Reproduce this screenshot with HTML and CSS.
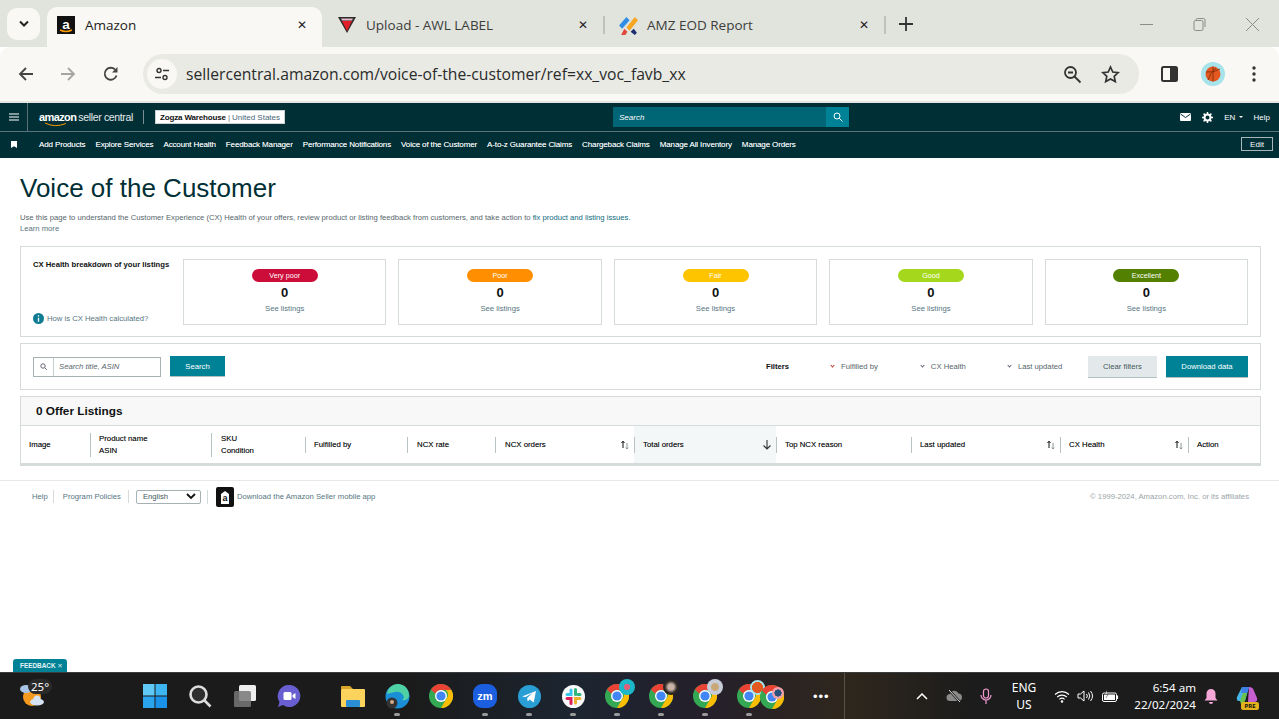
FILE: index.html
```html
<!DOCTYPE html>
<html lang="en">

<head>
    <meta charset="UTF-8">
    <meta name="viewport" content="width=device-width, initial-scale=1.0">
    <title>Voice of the Customer</title>
    <link rel="stylesheet" href="styles.css">
</head>

<body>

    <!-- Shared icons -->
    <svg class="defs" width="0" height="0">
        <symbol id="chrome" viewBox="0 0 24 24">
            <circle cx="12" cy="12" r="12" fill="#34a853"/>
            <path d="M12 0a12 12 0 0 1 10.4 6H12a6 6 0 0 0-5.6 3.8L1.9 5.6A12 12 0 0 1 12 0z" fill="#ea4335"/>
            <path d="M22.4 6A12 12 0 0 1 12 24l5.2-9a6 6 0 0 0-.4-9z" fill="#fbbc04"/>
            <circle cx="12" cy="12" r="6" fill="#fff"/>
            <circle cx="12" cy="12" r="4.6" fill="#4285f4"/>
        </symbol>
        <symbol id="sort" viewBox="0 0 10 10">
            <path d="M3 8V1.5M1.5 3L3 1.2 4.5 3" fill="none" stroke="#111" stroke-width="1"/>
            <path d="M7 3v6M5.8 7.6L7 9l1.2-1.4" fill="none" stroke="#8a9699" stroke-width="1"/>
        </symbol>
    </svg>

    <!-- Browser tabs -->
    <header class="tabstrip">
        <div class="tab-menu">
            <svg width="12" height="8" viewBox="0 0 12 8"><path d="M2 1.5l4 4 4-4" fill="none" stroke="#222" stroke-width="2"/></svg>
        </div>
        <div class="tab tab-active">
            <svg class="favicon" viewBox="0 0 18 18">
                <rect width="18" height="18" fill="#111"/>
                <text x="9" y="12.500" text-anchor="middle" class="favicon-a">a</text>
                <path d="M3 14q6 3 12 0" fill="none" stroke="#f90" stroke-width="1.400"/>
            </svg>
            <span class="tab-title">Amazon</span>
            <span class="tab-close">&#10005;</span>
        </div>
        <div class="tab tab-second">
            <svg class="favicon" viewBox="0 0 18 18">
                <path d="M0 1h18l-9 16z" fill="#2b2b2b"/>
                <path d="M4 5h10l-5 10z" fill="#e11d2a"/>
                <path d="M3 2.500h12l-1 2H4z" fill="#e8b9c9"/>
            </svg>
            <span class="tab-title">Upload - AWL LABEL</span>
            <span class="tab-close">&#10005;</span>
        </div>
        <div class="tab-sep"></div>
        <div class="tab">
            <svg class="favicon favicon-wide" viewBox="0 0 20 20">
                <path d="M1 10L8 2l3 3-7 8z" fill="#2f8de4"/>
                <path d="M8 12l8-10 3 3-8 10z" fill="#f5a623"/>
                <path d="M6 13l3 3-2 3H3z" fill="#e0483e"/>
                <path d="M12 16l3-3 3 4-2 2z" fill="#1d2f6f"/>
            </svg>
            <span class="tab-title">AMZ EOD Report</span>
            <span class="tab-close">&#10005;</span>
        </div>
        <div class="tab-sep"></div>
        <svg class="tab-new" width="14" height="14" viewBox="0 0 14 14"><path d="M7 0v14M0 7h14" stroke="#333" stroke-width="1.800"/></svg>
        <div class="window-controls">
            <svg width="13" height="13" viewBox="0 0 13 13"><path d="M0 6.500h13" stroke="#8b8b88"/></svg>
            <svg width="13" height="13" viewBox="0 0 13 13"><path d="M3 2.500V2a1.500 1.500 0 0 1 1.500-1.500h6A1.500 1.500 0 0 1 12 2v7" fill="none" stroke="#8b8b88"/><rect x="1" y="2.500" width="9" height="10" rx="1.500" fill="none" stroke="#8b8b88"/></svg>
            <svg width="13" height="13" viewBox="0 0 13 13"><path d="M0 0l13 13M13 0L0 13" stroke="#8b8b88"/></svg>
        </div>
    </header>

    <!-- Browser toolbar -->
    <div class="toolbar">
        <svg class="tool" width="16" height="16" viewBox="0 0 16 16"><path d="M15 8H2M8 2L2 8l6 6" fill="none" stroke="#444" stroke-width="1.800"/></svg>
        <svg class="tool" width="16" height="16" viewBox="0 0 16 16"><path d="M1 8h13M8 2l6 6-6 6" fill="none" stroke="#a5a5a2" stroke-width="1.800"/></svg>
        <svg class="tool" width="16" height="16" viewBox="0 0 16 16"><path d="M13.500 9.500A6 6 0 1 1 12 3.500" fill="none" stroke="#444" stroke-width="1.800"/><path d="M14.500 1v5.500H9z" fill="#444"/></svg>
        <div class="omnibox">
            <span class="site-info">
                <svg width="14" height="14" viewBox="0 0 14 14"><circle cx="4" cy="3.500" r="2" fill="none" stroke="#333" stroke-width="1.400"/><path d="M8 3.500h6M0 10.500h6" stroke="#333" stroke-width="1.400"/><circle cx="10" cy="10.500" r="2" fill="none" stroke="#333" stroke-width="1.400"/></svg>
            </span>
            <span class="url">sellercentral.amazon.com/voice-of-the-customer/ref=xx_voc_favb_xx</span>
            <svg width="19" height="19" viewBox="0 0 19 19"><circle cx="7.500" cy="7.500" r="5.500" fill="none" stroke="#333" stroke-width="1.800"/><path d="M5 7.500h5M11.500 11.500l6 6" stroke="#333" stroke-width="1.800"/></svg>
            <svg width="19" height="19" viewBox="0 0 19 19"><path d="M9.500 2l2.300 5 5.400.6-4 3.700 1.100 5.300-4.800-2.700-4.800 2.700 1.100-5.300-4-3.700 5.400-.6z" fill="none" stroke="#333" stroke-width="1.700"/></svg>
        </div>
        <svg class="side-panel" width="17" height="16" viewBox="0 0 17 16"><rect x="1" y="1" width="15" height="14" rx="1.500" fill="#f9f8f4" stroke="#333" stroke-width="2"/><rect x="9" y="1" width="7" height="14" fill="#333"/></svg>
        <svg class="avatar" width="24" height="24" viewBox="0 0 24 24">
            <circle cx="12" cy="12" r="12" fill="#a6e3ea"/>
            <circle cx="12" cy="12" r="7.500" fill="#e2581f"/>
            <path d="M12 4.500v15M5 10q7 1 14-3M7 18q2-7 8-12" fill="none" stroke="#7c2b0c" stroke-width=".8"/>
        </svg>
        <svg class="kebab" width="4" height="16" viewBox="0 0 4 16"><circle cx="2" cy="2" r="1.700" fill="#333"/><circle cx="2" cy="8" r="1.700" fill="#333"/><circle cx="2" cy="14" r="1.700" fill="#333"/></svg>
    </div>

    <!-- Seller Central header -->
    <div class="topbar">
        <div class="burger">
            <svg width="10" height="8" viewBox="0 0 10 8"><path d="M0 1h10M0 4h10M0 7h10" stroke="#fff" stroke-width="1.100"/></svg>
        </div>
        <div class="brand">
            <span class="brand-amazon">amazon</span>
            <span class="brand-seller">seller central</span>
            <svg class="brand-smile" width="24" height="5" viewBox="0 0 24 5"><path d="M1 1q10 5 21 .5" fill="none" stroke="#f90" stroke-width="1"/></svg>
        </div>
        <div class="store">
            <b>Zogza Warehouse</b><span class="store-sep">|</span><span class="store-region">United States</span>
        </div>
        <div class="site-search">
            <span class="site-search-text">Search</span>
            <span class="site-search-btn">
                <svg width="10" height="10" viewBox="0 0 10 10"><circle cx="4" cy="4" r="3" fill="none" stroke="#fff"/><path d="M6.200 6.200L9.500 9.500" stroke="#fff"/></svg>
            </span>
        </div>
        <div class="top-actions">
            <svg width="11" height="8" viewBox="0 0 11 8"><rect width="11" height="8" rx="1" fill="#fff"/><path d="M.5 1l5 3.500 5-3.500" fill="none" stroke="#002f36"/></svg>
            <svg width="11" height="11" viewBox="0 0 11 11"><circle cx="5.500" cy="5.500" r="3" fill="none" stroke="#fff" stroke-width="2"/><path d="M5.500 0v2M5.500 9v2M0 5.500h2M9 5.500h2M1.600 1.600L3 3M8 8l1.400 1.400M1.600 9.400L3 8M8 3l1.400-1.400" stroke="#fff" stroke-width="1.500"/></svg>
            <span class="lang">EN <i class="caret"></i></span>
            <span>Help</span>
        </div>
    </div>

    <!-- Bookmarks row -->
    <nav class="navrow">
        <svg class="bookmark" width="6" height="7" viewBox="0 0 6 7"><path d="M0 0h6v7L3 5.300 0 7z" fill="#fff"/></svg>
        <a href="#">Add Products</a>
        <a href="#">Explore Services</a>
        <a href="#">Account Health</a>
        <a href="#">Feedback Manager</a>
        <a href="#">Performance Notifications</a>
        <a href="#">Voice of the Customer</a>
        <a href="#">A-to-z Guarantee Claims</a>
        <a href="#">Chargeback Claims</a>
        <a href="#">Manage All Inventory</a>
        <a href="#">Manage Orders</a>
        <button class="edit-btn">Edit</button>
    </nav>

    <!-- Page -->
    <main class="page">
        <div class="content">
            <h1>Voice of the Customer</h1>
            <p class="intro">Use this page to understand the Customer Experience (CX) Health of your offers, review product or listing feedback from customers, and take action to <a href="#">fix product and listing issues.</a><br><a href="#" class="learn">Learn more</a></p>

            <section class="panel health">
                <div class="health-side">
                    <b>CX Health breakdown of your listings</b>
                    <a href="#" class="health-how">
                        <svg width="11" height="11" viewBox="0 0 11 11"><circle cx="5.500" cy="5.500" r="5.500" fill="#0f7c94"/><path d="M5.500 2.300v1.200M5.500 4.700v4" stroke="#fff" stroke-width="1.300"/></svg>
                        How is CX Health calculated?
                    </a>
                </div>
                <div class="health-card"><span class="pill pill-verypoor">Very poor</span><strong>0</strong><a href="#">See listings</a></div>
                <div class="health-card"><span class="pill pill-poor">Poor</span><strong>0</strong><a href="#">See listings</a></div>
                <div class="health-card"><span class="pill pill-fair">Fair</span><strong>0</strong><a href="#">See listings</a></div>
                <div class="health-card"><span class="pill pill-good">Good</span><strong>0</strong><a href="#">See listings</a></div>
                <div class="health-card"><span class="pill pill-excellent">Excellent</span><strong>0</strong><a href="#">See listings</a></div>
            </section>

            <section class="panel filters">
                <div class="search-box">
                    <span class="search-icon">
                        <svg width="7" height="7" viewBox="0 0 7 7"><circle cx="3" cy="3" r="2.200" fill="none" stroke="#667"/><path d="M4.600 4.600L6.800 6.800" stroke="#667"/></svg>
                    </span>
                    <span class="search-hint">Search title, ASIN</span>
                </div>
                <button class="btn btn-teal btn-search">Search</button>
                <b class="filters-label">Filters</b>
                <span class="filter filter-fulfilled"><i class="chev chev-red"></i>Fulfilled by</span>
                <span class="filter filter-health"><i class="chev"></i>CX Health</span>
                <span class="filter filter-updated"><i class="chev"></i>Last updated</span>
                <button class="btn btn-grey">Clear filters</button>
                <button class="btn btn-teal btn-download">Download data</button>
            </section>

            <section class="panel listings">
                <h2>0 Offer Listings</h2>
                <div class="table-head">
                    <div class="col col-image"><span class="cell">Image</span></div>
                    <div class="col col-name"><span class="cell cell-tall">Product name<br>ASIN</span></div>
                    <div class="col col-sku"><span class="cell cell-tall">SKU<br>Condition</span></div>
                    <div class="col col-fulfilled"><span class="cell">Fulfilled by</span></div>
                    <div class="col col-rate"><span class="cell">NCX rate</span></div>
                    <div class="col col-orders"><span class="cell cell-sort">NCX orders<svg width="10" height="10"><use href="#sort"/></svg></span></div>
                    <div class="col col-total"><span class="cell cell-sort">Total orders<svg width="10" height="10" viewBox="0 0 10 10"><path d="M5 0v9M1.500 5.500L5 9l3.500-3.500" fill="none" stroke="#333" stroke-width="1.100"/></svg></span></div>
                    <div class="col col-reason"><span class="cell">Top NCX reason</span></div>
                    <div class="col col-updated"><span class="cell cell-sort">Last updated<svg width="10" height="10"><use href="#sort"/></svg></span></div>
                    <div class="col col-health"><span class="cell cell-sort">CX Health<svg width="10" height="10"><use href="#sort"/></svg></span></div>
                    <div class="col col-action"><span class="cell">Action</span></div>
                </div>
            </section>
        </div>

        <footer class="page-footer">
            <a href="#">Help</a>
            <a href="#" class="foot-link">Program Policies</a>
            <div class="foot-lang">
                <span class="lang-select">English
                    <svg width="10" height="7" viewBox="0 0 10 7"><path d="M1 1l4 4 4-4" fill="none" stroke="#111" stroke-width="1.800"/></svg>
                </span>
            </div>
            <a href="#" class="foot-app">
                <svg width="18" height="20" viewBox="0 0 18 20">
                    <rect width="18" height="20" rx="2" fill="#111"/>
                    <path d="M5 7l4-3 4 3v10H5z" fill="#fff"/>
                    <text x="9" y="14" text-anchor="middle" class="foot-app-a">a</text>
                </svg>
                Download the Amazon Seller mobile app
            </a>
            <span class="copyright">&copy; 1999-2024, Amazon.com, Inc. or its affiliates</span>
        </footer>

        <div class="feedback">FEEDBACK <span>&#10005;</span></div>
    </main>

    <!-- Windows taskbar -->
    <div class="taskbar">
        <div class="weather">
            <svg width="28" height="28" viewBox="0 0 28 28">
                <circle cx="13" cy="15" r="9" fill="#f39a1f"/>
                <ellipse cx="7" cy="7" rx="6" ry="4" fill="#a8c4e6"/>
                <ellipse cx="18" cy="20" rx="7" ry="3.500" fill="#d5e3f5"/>
                <circle cx="18" cy="17" r="3.500" fill="#d5e3f5"/>
            </svg>
            <span class="temp">25&deg;</span>
        </div>

        <div class="task-icons">
            <span class="task-icon task-start">
                <svg width="24" height="24" viewBox="0 0 24 24">
                    <path d="M0 0h11.500v11.500H0z" fill="#5fc8f5"/><path d="M12.500 0H24v11.500H12.500z" fill="#3db5f2"/>
                    <path d="M0 12.500h11.500V24H0z" fill="#2ba4ee"/><path d="M12.500 12.500H24V24H12.500z" fill="#1b92ea"/>
                </svg>
            </span>
            <span class="task-icon task-nudge">
                <svg width="24" height="24" viewBox="0 0 24 24"><circle cx="10.500" cy="10.500" r="8" fill="#2e2e2e" stroke="#ddd" stroke-width="2.600"/><path d="M16.500 16.500L22.500 22.500" stroke="#ddd" stroke-width="2.600"/></svg>
            </span>
            <span class="task-icon task-nudge">
                <svg width="24" height="24" viewBox="0 0 24 24"><rect x="6" y="1" width="17" height="16" rx="1.500" fill="#eee"/><rect x="1" y="7" width="17" height="16" rx="1.500" fill="#777" fill-opacity=".85"/></svg>
            </span>
            <span class="task-icon">
                <svg width="24" height="24" viewBox="0 0 24 24"><path d="M12 1a11 11 0 1 1-6 20l-5 2 1.500-5A11 11 0 0 1 12 1z" fill="#6a5fd0"/><rect x="6.500" y="8" width="8" height="8" rx="1.500" fill="#fff"/><path d="M15.500 11l3-2v6l-3-2z" fill="#fff"/></svg>
            </span>
            <span class="task-icon task-gap">
                <svg width="26" height="22" viewBox="0 0 26 22"><path d="M1 2a1 1 0 0 1 1-1h8l3 3h-12z" fill="#d9a527"/><rect x="1" y="4" width="24" height="18" rx="1" fill="#fcd35c"/><rect x="6" y="15" width="14" height="7" rx="1" fill="#2a8fd4"/></svg>
            </span>
            <span class="task-icon task-open">
                <svg width="25" height="25" viewBox="0 0 25 25">
                    <circle cx="12.500" cy="12.500" r="12" fill="#1a8fd8"/>
                    <path d="M2 10a11 11 0 0 1 22 2q-1 5-7 4 3-2 1-5-3-4-8-3-5 1-8 2z" fill="#4fd1a5"/>
                    <circle cx="7" cy="19" r="5.500" fill="#333"/><circle cx="7" cy="18" r="2" fill="#d6a98c"/>
                </svg>
            </span>
            <span class="task-icon"><svg width="24" height="24"><use href="#chrome"/></svg></span>
            <span class="task-icon task-open">
                <svg width="24" height="24" viewBox="0 0 24 24"><rect width="24" height="24" rx="9" fill="#1b5fe0"/><text x="12" y="16" text-anchor="middle" class="zoom-mark">zm</text></svg>
            </span>
            <span class="task-icon task-open">
                <svg width="23" height="23" viewBox="0 0 23 23"><circle cx="11.500" cy="11.500" r="11.500" fill="#2a9fd6"/><path d="M4 11.500l14-5.500-2.300 11.500-4-3-2 2-.6-3.500 5.500-5-7 4z" fill="#fff"/></svg>
            </span>
            <span class="task-icon task-open">
                <svg width="23" height="23" viewBox="0 0 23 23">
                    <circle cx="11.500" cy="11.500" r="11.500" fill="#fafafa"/>
                    <path d="M9 5v4.500H5" stroke="#36c5f0" stroke-width="3" fill="none" stroke-linecap="round"/>
                    <path d="M13.500 4.500v5M18 9.500h-2" stroke="#2eb67d" stroke-width="3" stroke-linecap="round"/>
                    <path d="M13.500 18v-4.500H18" stroke="#ecb22e" stroke-width="3" fill="none" stroke-linecap="round"/>
                    <path d="M9 18.500v-5H5" stroke="#e01e5a" stroke-width="3" fill="none" stroke-linecap="round"/>
                </svg>
            </span>
            <span class="task-icon task-open"><svg width="24" height="24"><use href="#chrome"/></svg><i class="badge badge-teal"></i></span>
            <span class="task-icon task-open"><svg width="24" height="24"><use href="#chrome"/></svg><i class="badge badge-dark"></i></span>
            <span class="task-icon task-open"><svg width="24" height="24"><use href="#chrome"/></svg><i class="badge badge-grey"></i></span>
            <span class="task-icon task-open">
                <svg width="24" height="24"><use href="#chrome"/></svg><i class="badge badge-ball"></i>
                <svg class="pair-second" width="24" height="24"><use href="#chrome"/></svg><i class="badge badge-pink"></i>
            </span>
            <span class="task-more">&bull;&bull;&bull;</span>
        </div>

        <div class="tray">
            <svg width="12" height="7" viewBox="0 0 12 7"><path d="M1 6l5-5 5 5" fill="none" stroke="#fff" stroke-width="1.500"/></svg>
            <svg class="tray-cloud" width="17" height="14" viewBox="0 0 17 14"><path d="M4 12a3.500 3.500 0 0 1 0-7 4.500 4.500 0 0 1 8.500-.5A3.800 3.800 0 0 1 13 12z" fill="#8a8a8a"/><path d="M3 1l11 12" stroke="#1c1c1c" stroke-width="2.500"/><path d="M3 1l11 12" stroke="#ddd"/></svg>
            <svg class="tray-mic" width="12" height="17" viewBox="0 0 12 17"><rect x="3.500" y="1" width="5" height="9" rx="2.500" fill="none" stroke="#f29ad0" stroke-width="1.200"/><path d="M1 7a5 5 0 0 0 10 0M6 12v4" fill="none" stroke="#f29ad0" stroke-width="1.200"/></svg>
            <span class="tray-lang">ENG<br>US</span>
            <svg class="tray-wifi" width="16" height="13" viewBox="0 0 16 13"><path d="M1 4.500a10 10 0 0 1 14 0M3.200 7a7 7 0 0 1 9.600 0M5.400 9.300a4 4 0 0 1 5.200 0" fill="none" stroke="#fff" stroke-width="1.100"/><circle cx="8" cy="11.500" r="1.200" fill="#fff"/></svg>
            <svg class="tray-vol" width="16" height="14" viewBox="0 0 16 14"><path d="M1 5h2.500L7 2v10L3.500 9H1z" fill="none" stroke="#fff"/><path d="M9.500 5a3 3 0 0 1 0 4M11.500 3.500a6 6 0 0 1 0 7M13.500 2a8 8 0 0 1 0 10" fill="none" stroke="#fff"/></svg>
            <svg class="tray-bat" width="17" height="13" viewBox="0 0 17 13"><rect x=".5" y="3" width="14" height="8.500" rx="1.500" fill="none" stroke="#fff"/><rect x="2" y="4.500" width="11" height="5.500" fill="#fff"/><path d="M15.500 5.500v3.500" stroke="#fff" stroke-width="1.200"/><path d="M5 0L2.500 4.500H6L4 8" fill="#fff" stroke="#1c1c1c" stroke-width=".5"/></svg>
            <span class="clock">6:54 am<br>22/02/2024</span>
            <svg class="tray-bell" width="14" height="16" viewBox="0 0 14 16"><path d="M7 1a4.500 4.500 0 0 1 4.500 4.500V10l2 2.500H.5l2-2.500V5.500A4.500 4.500 0 0 1 7 1z" fill="#f7a6d8"/><path d="M5 14h4a2 2 0 0 1-4 0z" fill="#f7a6d8"/></svg>
            <span class="copilot">
                <svg width="23" height="20" viewBox="0 0 23 20">
                    <path d="M6 1h7l-4 14H3Q0 15 1 11z" fill="#46b6e8"/>
                    <path d="M6 1h7l-2 6H5z" fill="#3f7fe8"/>
                    <path d="M13 1q4 0 5 4l3 7q1 4-3 4h-6z" fill="#c75fd1"/>
                    <path d="M4 15l3-8h4L8 18H5z" fill="#6cc24a"/>
                </svg>
                <i>PRE</i>
            </span>
        </div>
    </div>

</body>

</html>
```

FILE: styles.css
```css
/* General Styles */
* {
    box-sizing: border-box;
}

html,
body {
    height: 100%;
}

body {
    margin: 0;
    display: flex;
    flex-direction: column;
    overflow: hidden;
    font-family: "Liberation Sans", Arial, sans-serif;
    color: #0f1111;
    background-color: #fff;
}

a {
    color: inherit;
    text-decoration: none;
}

.defs {
    position: absolute;
}

/* Browser tabs */
.tabstrip {
    flex: none;
    display: flex;
    align-items: flex-end;
    height: 47px;
    padding-left: 7px;
    background-color: #e1e3dd;
    font-family: "Open Sans", sans-serif;
    font-size: 13.5px;
    color: #3c3d3b;
}

.tab-menu {
    display: flex;
    align-items: center;
    justify-content: center;
    align-self: flex-start;
    width: 33px;
    height: 32px;
    margin-top: 8px;
    border-radius: 10px;
    background-color: #f9f8f4;
}

.tab {
    display: flex;
    align-items: center;
    width: 281px;
    height: 40px;
    padding: 0 0 4px 16px;
}

.tab-second {
    width: 283px;
}

.tab-active {
    width: 275px;
    margin-left: 7px;
    padding-left: 10px;
    border-radius: 10px 10px 0 0;
    background-color: #f9f8f4;
    color: #222;
}

.favicon {
    flex: none;
    width: 18px;
    height: 18px;
    margin-right: 10px;
}

.favicon-wide {
    width: 21px;
    height: 21px;
    margin: 0 8px 0 -3px;
}

.favicon-a {
    font: bold 13.5px "Liberation Sans", sans-serif;
    fill: #fff;
}

.tab-title {
    flex: 1;
}

.tab-close {
    width: 44px;
    font-size: 12px;
    font-family: "DejaVu Sans", sans-serif;
    color: #222;
    text-align: center;
}

.tab-active .tab-close {
    width: 40px;
}

.tab-sep {
    align-self: flex-start;
    width: 2px;
    height: 18px;
    margin: 16px 0 0 -2px;
    background-color: #bfc1bb;
}

.tab-new {
    align-self: flex-start;
    margin: 17px 0 0 13px;
}

.window-controls {
    display: flex;
    align-self: flex-start;
    gap: 40px;
    margin: 18px 20px 0 auto;
}

/* Browser toolbar */
.toolbar {
    flex: none;
    display: flex;
    align-items: center;
    height: 56px;
    padding-left: 18px;
    border-radius: 10px 10px 0 0;
    border-bottom: 2px solid #e5e5e1;
    background-color: #f9f8f4;
}

.tool {
    flex: none;
    margin-right: 26px;
}

.toolbar .tool:nth-child(2) {
    margin-right: 27px;
}

.toolbar .tool:nth-child(3) {
    margin-right: 24px;
}

.omnibox {
    display: flex;
    align-items: center;
    gap: 19px;
    width: 996px;
    height: 40px;
    padding: 0 19px 0 4px;
    border-radius: 20px;
    background-color: #e9eae4;
}

.site-info {
    display: flex;
    align-items: center;
    justify-content: center;
    width: 30px;
    height: 30px;
    margin-right: -10px;
    border-radius: 50%;
    background-color: #f9f8f4;
}

.url {
    flex: 1;
    font-family: "Open Sans", sans-serif;
    font-size: 15.7px;
    color: #2a2b2a;
}

.side-panel {
    margin-left: 22px;
}

.avatar {
    margin-left: 23px;
}

.kebab {
    margin-left: 27px;
}

/* Seller Central header */
.topbar {
    flex: none;
    display: flex;
    align-items: center;
    height: 29px;
    border-bottom: 1px solid #5b7378;
    background-color: #002f36;
    color: #fff;
}

.burger {
    display: flex;
    align-items: center;
    justify-content: center;
    width: 28px;
    height: 100%;
    border-right: 1px solid #5b7378;
}

.brand {
    position: relative;
    display: flex;
    align-items: baseline;
    gap: 2px;
    width: 105px;
    height: 14px;
    margin-left: 11px;
    border-right: 1px solid #7b8f93;
    white-space: nowrap;
}

.brand-amazon {
    font-size: 11px;
    font-weight: bold;
    letter-spacing: -0.6px;
    line-height: 14px;
}

.brand-seller {
    font-size: 10.5px;
    letter-spacing: -0.35px;
    color: #e5ebec;
    line-height: 14px;
}

.brand-smile {
    position: absolute;
    left: 5px;
    top: 12px;
}

.store {
    display: flex;
    align-items: center;
    width: 130px;
    height: 14px;
    margin-left: 11px;
    padding-left: 4px;
    border: 1px solid #c9d1d2;
    background-color: #fff;
    font-size: 8px;
    color: #111;
    white-space: nowrap;
}

.store b {
    letter-spacing: -0.15px;
}

.store-sep {
    margin: 0 2px;
    color: #777;
}

.store-region {
    color: #49687a;
}

.site-search {
    display: flex;
    align-items: center;
    justify-content: space-between;
    width: 236px;
    height: 20px;
    margin-left: 328px;
    padding-left: 6px;
    background-color: #006574;
    font-size: 8px;
    font-style: italic;
}

.site-search-btn {
    display: flex;
    align-items: center;
    justify-content: center;
    width: 23px;
    height: 20px;
    background-color: #008296;
}

.top-actions {
    display: flex;
    align-items: center;
    gap: 11px;
    margin: 0 9px 0 auto;
    font-size: 8px;
}

.caret {
    display: inline-block;
    margin-left: 1px;
    vertical-align: middle;
    border: 2.500px solid transparent;
    border-top-color: #fff;
    border-bottom-width: 0;
}

/* Bookmarks row */
.navrow {
    flex: none;
    display: flex;
    align-items: center;
    gap: 10px;
    height: 26px;
    padding: 0 6px 2px 11px;
    background-color: #002f36;
    color: #fff;
    font-size: 8px;
    letter-spacing: -0.13px;
    text-shadow: 0 0 0.3px rgba(255, 255, 255, 0.5);
    white-space: nowrap;
}

.bookmark {
    margin-right: 12px;
}

.edit-btn {
    width: 32px;
    height: 14px;
    margin-left: auto;
    padding: 0;
    border: 1px solid #a8b6b8;
    background: none;
    color: #fff;
    font: 8px "Liberation Sans", sans-serif;
}

/* Page */
.page {
    position: relative;
    flex: 1;
    display: flex;
    flex-direction: column;
    min-height: 0;
}

.content {
    padding: 0 18px 0 20px;
}

h1 {
    margin: 15px 0 0;
    font-size: 26px;
    font-weight: normal;
    line-height: 30px;
    color: #002f36;
}

.intro {
    margin: 9px 0 0;
    font-size: 7.670px;
    line-height: 11px;
    color: #56666b;
}

.intro a {
    color: #0f6b80;
}

.intro .learn {
    color: #5a7480;
}

.panel {
    border: 1px solid #d5dbdb;
}

/* CX Health cards */
.health {
    display: flex;
    gap: 12px;
    height: 91px;
    margin-top: 12px;
    padding: 12px 12px 11px;
}

.health-side {
    flex: none;
    display: flex;
    flex-direction: column;
    justify-content: space-between;
    width: 138px;
    padding-top: 1px;
    font-size: 7.700px;
    white-space: nowrap;
}

.health-how {
    display: flex;
    align-items: center;
    gap: 3px;
    margin-bottom: 1px;
    color: #56767f;
}

.health-card {
    flex: 1;
    display: flex;
    flex-direction: column;
    align-items: center;
    padding-top: 9px;
    border: 1px solid #d5dbdb;
    font-size: 7.700px;
    color: #56767f;
}

.health-card strong {
    margin-top: 3px;
    font-size: 13px;
    line-height: 15px;
    color: #0f1111;
}

.health-card a {
    margin-top: 4px;
}

.pill {
    width: 66px;
    height: 13px;
    border-radius: 7px;
    color: #fff;
    font-size: 7.200px;
    line-height: 13px;
    text-align: center;
}

.pill-verypoor {
    background-color: #cc0c39;
}

.pill-poor {
    background-color: #ff8f00;
}

.pill-fair {
    background-color: #ffc400;
}

.pill-good {
    background-color: #a5d81c;
}

.pill-excellent {
    background-color: #538000;
}

/* Search and filters */
.filters {
    display: flex;
    align-items: center;
    height: 47px;
    margin-top: 6px;
    padding: 0 12px;
    font-size: 7.700px;
    color: #56666b;
}

.search-box {
    display: flex;
    align-items: center;
    width: 128px;
    height: 20px;
    border: 1px solid #a6b1b3;
}

.search-icon {
    display: flex;
    align-items: center;
    justify-content: center;
    width: 20px;
    height: 100%;
    border-right: 1px solid #c6cfd1;
}

.search-hint {
    padding-left: 5px;
    font-style: italic;
}

.btn {
    height: 21px;
    padding: 0;
    border: 0;
    border-bottom: 1px solid #b4bfc1;
    font: 7.700px "Liberation Sans", sans-serif;
}

.btn-teal {
    background-color: #008296;
    color: #fff;
}

.btn-grey {
    width: 69px;
    height: 22px;
    background-color: #e3e9ea;
    color: #44585d;
}

.btn-search {
    width: 55px;
    margin-left: 9px;
}

.btn-download {
    width: 82px;
    height: 22px;
    margin-left: 9px;
}

.filters-label {
    margin-left: 541px;
    color: #0f1111;
}

.filter {
    display: flex;
    align-items: center;
    white-space: nowrap;
}

.filter-fulfilled {
    margin-left: 42px;
}

.filter-health {
    margin-left: 43px;
}

.filter-updated {
    margin-left: 42px;
    margin-right: auto;
}

.chev {
    width: 3px;
    height: 3px;
    margin: -2px 7px 0 0;
    border-right: 1px solid #667;
    border-bottom: 1px solid #667;
    transform: rotate(45deg);
}

.chev-red {
    border-color: #c0392b;
}

/* Listings table */
.listings {
    margin-top: 6px;
    border-bottom: 3px solid #d5dbdb;
}

h2 {
    height: 29px;
    margin: 0;
    padding-left: 15px;
    border-bottom: 1px solid #d5dbdb;
    background-color: #f8f8f8;
    font-size: 11.800px;
    line-height: 28px;
    font-weight: bold;
    color: #0f1111;
}

.table-head {
    display: flex;
    height: 37px;
    font-size: 7.800px;
    color: #0f1111;
    text-shadow: 0 0 0.3px rgba(15, 17, 17, 0.5);
}

.col {
    flex: none;
    display: flex;
    align-items: center;
}

.cell {
    flex: 1;
    padding-left: 8px;
    border-left: 1px solid #b9c3c5;
    line-height: 16px;
    white-space: nowrap;
}

.cell-tall {
    line-height: 12px;
}

.col-image .cell {
    border-left: 0;
}

.col-sku .cell,
.col-rate .cell,
.col-orders .cell {
    padding-left: 9px;
}

.cell-sort {
    display: flex;
    align-items: center;
    justify-content: space-between;
    padding-right: 4px;
}

.col-image {
    width: 69px;
}

.col-name {
    width: 121px;
}

.col-sku {
    width: 94px;
}

.col-fulfilled {
    width: 102px;
}

.col-rate {
    width: 88px;
}

.col-orders {
    width: 139px;
}

.col-total {
    width: 142px;
    background-color: #f3f7f8;
}

.col-reason {
    width: 135px;
    background-color: #fff;
}

.col-updated {
    width: 149px;
}

.col-health {
    width: 128px;
}

.col-action {
    flex: 1;
}

/* Footer */
.page-footer {
    display: flex;
    align-items: center;
    height: 32px;
    margin-top: 14px;
    padding: 0 30px 0 32px;
    border-top: 1px solid #e7e9e9;
    font-size: 7.700px;
    color: #56767f;
}

.foot-link {
    margin-left: 5px;
    padding: 0 7px 0 9px;
    border-left: 1px solid #d5dbdb;
    border-right: 1px solid #d5dbdb;
    line-height: 13px;
}

.foot-lang {
    margin-left: 7px;
    padding-right: 6px;
    border-right: 1px solid #d5dbdb;
}

.lang-select {
    display: flex;
    align-items: center;
    justify-content: space-between;
    width: 65px;
    height: 14px;
    padding: 0 4px 0 6px;
    border: 1px solid #a6b1b3;
    border-radius: 2px;
    color: #44585d;
}

.foot-app {
    display: flex;
    align-items: center;
    gap: 3px;
    margin-left: 8px;
}

.foot-app-a {
    font: bold 9px "Liberation Sans", sans-serif;
    fill: #111;
}

.copyright {
    margin-left: auto;
    color: #9aa5a8;
}

.feedback {
    position: absolute;
    left: 13px;
    bottom: 0;
    width: 54px;
    height: 13px;
    padding-left: 7px;
    border-radius: 3px 3px 0 0;
    background-color: #008296;
    color: #e8f4f6;
    font-size: 6.400px;
    font-weight: bold;
    line-height: 14px;
    white-space: nowrap;
}

.feedback span {
    font-weight: normal;
    font-family: "DejaVu Sans", sans-serif;
}

/* Windows taskbar */
.taskbar {
    flex: none;
    position: relative;
    display: flex;
    align-items: center;
    height: 47px;
    border-top: 1px solid #3a3c3e;
    background: linear-gradient(90deg, #1b1b1b 0%, #1b1b1b 32%, #1c2531 45%, #241f2b 55%, #2f271d 66%, #1c1c1c 76%);
    color: #fff;
}

.weather {
    position: relative;
    flex: none;
    width: 133px;
    padding-left: 19px;
}

.weather svg {
    display: block;
}

.temp {
    position: absolute;
    left: 28px;
    top: -3px;
    padding: 0 3px;
    border-radius: 8px;
    background-color: #2a2a2a;
    font-family: "Noto Sans", sans-serif;
    font-size: 11.500px;
}

.task-icons {
    display: flex;
    align-items: center;
    height: 100%;
    width: 712px;
    border-right: 1px solid #55524a;
}

.task-icon {
    position: relative;
    flex: none;
    display: flex;
    align-items: center;
    justify-content: center;
    width: 44px;
    height: 100%;
}

.task-nudge {
    margin-left: 1px;
}

.task-gap {
    margin-left: 20px;
}

.task-open::after {
    content: "";
    position: absolute;
    left: 19px;
    bottom: 3px;
    width: 6px;
    height: 3px;
    border-radius: 2px;
    background-color: #9a9a9a;
}

.badge {
    position: absolute;
    top: 6px;
    left: 24px;
    width: 16px;
    height: 16px;
    border-radius: 50%;
}

.badge-teal {
    background: radial-gradient(circle, #e0607a 25%, #1cb8c9 30%);
}

.badge-dark {
    background: radial-gradient(circle, #c9b3a8 25%, #2a2522 55%);
}

.badge-grey {
    background: radial-gradient(circle, #c9a777 30%, #c7ccd8 40%);
}

.badge-ball {
    left: 23px;
    top: 7px;
    width: 15px;
    height: 15px;
    background: radial-gradient(circle, #e2581f 50%, #a6e3ea 55%);
}

.badge-pink {
    left: 45px;
    top: 14px;
    width: 12px;
    height: 12px;
    background: radial-gradient(circle, #28507a 40%, #f0a0a8 45%);
}

.pair-second {
    position: absolute;
    left: 33px;
    top: 12px;
}

.task-more {
    margin-left: 42px;
    font-size: 13px;
    letter-spacing: 1px;
}

.zoom-mark {
    font: bold 11px "Liberation Sans", sans-serif;
    fill: #fff;
}

.tray {
    flex: 1;
    display: flex;
    align-items: center;
    padding-left: 71px;
    font-family: "Noto Sans", sans-serif;
    font-size: 12px;
    line-height: 17px;
}

.tray-cloud {
    margin-left: 18px;
}

.tray-mic {
    margin-left: 17px;
}

.tray-lang {
    width: 26px;
    margin-left: 19px;
    text-align: center;
}

.tray-wifi {
    margin-left: 17px;
}

.tray-vol {
    margin-left: 7px;
}

.tray-bat {
    margin-left: 9px;
}

.clock {
    width: 70px;
    margin-left: 7px;
    font-size: 11.600px;
    text-align: right;
}

.tray-bell {
    margin-left: 8px;
}

.copilot {
    position: relative;
    margin-left: 18px;
    line-height: 0;
}

.copilot i {
    position: absolute;
    left: 5px;
    bottom: -4px;
    width: 18px;
    height: 8px;
    border-radius: 2px;
    background-color: #e3b21c;
    color: #111;
    font-size: 6px;
    font-style: normal;
    font-weight: bold;
    line-height: 8px;
    text-align: center;
}
```
